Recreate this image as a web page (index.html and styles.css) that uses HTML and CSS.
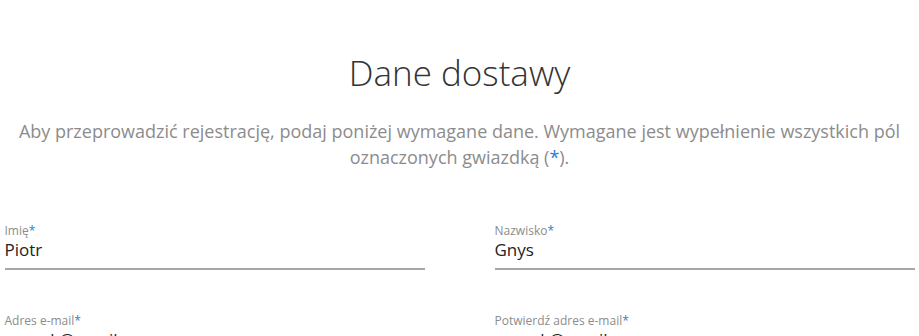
FILE: index.html
```html
<html>
  <head>
    <link rel="stylesheet" href="styles.css">
    <title>Dane dostawy</title>
  </head>
  <body>
    <div class="page">
      <h1 class="title">Dane dostawy</h1>
      <p class="intro">
        Aby przeprowadzić rejestrację, podaj poniżej wymagane dane. Wymagane jest wypełnienie wszystkich pól
        oznaczonych gwiazdką (<span class="req">*</span>).
      </p>
      <form class="fields">
        <label class="field">
          <span class="label">Imię<span class="req">*</span></span>
          <input type="text" value="Piotr">
        </label>
        <label class="field">
          <span class="label">Nazwisko<span class="req">*</span></span>
          <input type="text" value="Gnys">
        </label>
        <label class="field">
          <span class="label">Adres e-mail<span class="req">*</span></span>
          <input type="text" value="gnysek@gmail.com">
        </label>
        <label class="field">
          <span class="label">Potwierdź adres e-mail<span class="req">*</span></span>
          <input type="text" value="gnysek@gmail.com">
        </label>
      </form>
    </div>
  </body>
</html>
```
FILE: styles.css
```css
body {
  margin: 0;
  font-family: "Open Sans", "Noto Sans", sans-serif;
  background: #fff;
  color: #333;
}

.page {
  width: 910px;
  margin: 0 auto;
  padding-top: 48px;
}

.title {
  margin: 0;
  text-align: center;
  font-size: 35px;
  font-weight: 300;
  line-height: 50px;
  color: #333;
}

.intro {
  margin: 20px 0 0;
  text-align: center;
  font-size: 18px;
  font-weight: 400;
  line-height: 26px;
  color: #8c8c8c;
}

.req {
  color: #2a7fd4;
}

.fields {
  margin-top: 52px;
  display: grid;
  grid-template-columns: 420px 420px;
  column-gap: 70px;
  row-gap: 42px;
}

.field {
  display: flex;
  flex-direction: column;
}

.label {
  font-size: 12px;
  line-height: 17px;
  color: #8c8c8c;
}

.field input {
  border: 0;
  border-bottom: 2px solid #a6a6a6;
  padding: 0 0 7px;
  font-family: inherit;
  font-size: 17px;
  line-height: 22px;
  color: #222;
  outline: none;
}
```
